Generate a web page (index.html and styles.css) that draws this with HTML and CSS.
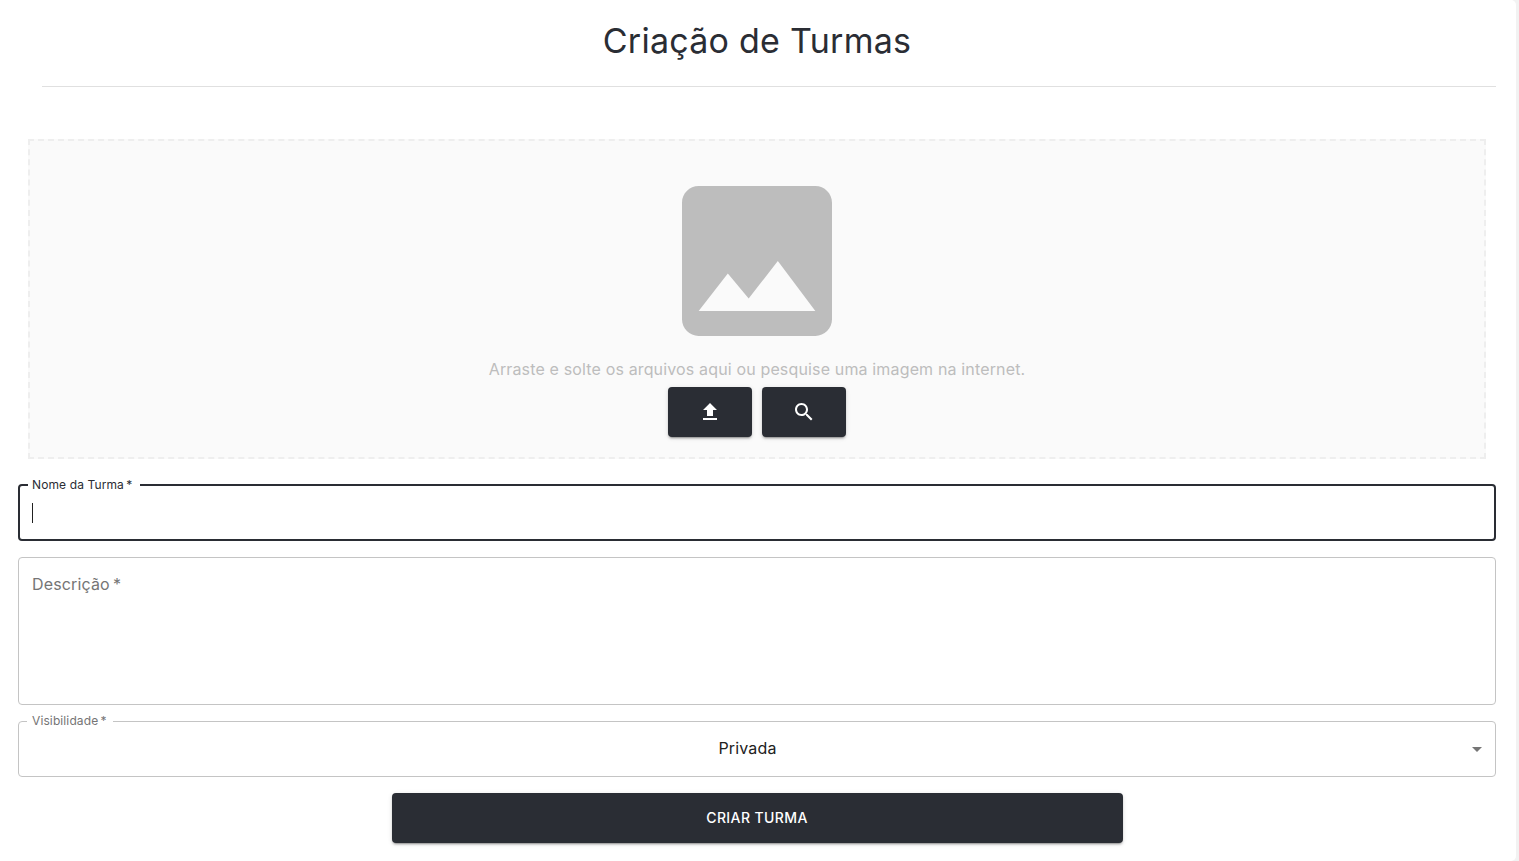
FILE: index.html
```html
<!DOCTYPE html>
<html lang="pt-BR">
<head>
<meta charset="utf-8">
<meta name="viewport" content="width=device-width, initial-scale=1">
<title>Criação de Turmas</title>
<link rel="stylesheet" href="styles.css">
</head>
<body>
<main class="panel">
  <h1 class="title">Criação de Turmas</h1>
  <hr class="divider">
  <form class="form">
    <section class="dropzone">
      <svg class="dropzone-image" viewBox="0 0 24 24" aria-hidden="true"><path d="M21 19V5c0-1.100-.9-2-2-2H5c-1.100 0-2 .9-2 2v14c0 1.100.9 2 2 2h14c1.100 0 2-.9 2-2zM8.500 13.500l2.500 3.010L14.500 12l4.500 6H5l3.500-4.500z"/></svg>
      <p class="dropzone-text">Arraste e solte os arquivos aqui ou pesquise uma imagem na internet.</p>
      <div class="dropzone-actions">
        <button type="button" class="button button-icon" aria-label="Enviar arquivo">
          <svg class="icon" viewBox="0 0 24 24" aria-hidden="true"><path d="M9 16h6v-6h4l-7-7-7 7h4zm-4 2h14v2H5z"/></svg>
        </button>
        <button type="button" class="button button-icon" aria-label="Pesquisar imagem">
          <svg class="icon" viewBox="0 0 24 24" aria-hidden="true"><path d="M15.500 14h-.79l-.28-.27C15.410 12.590 16 11.110 16 9.500 16 5.910 13.090 3 9.500 3S3 5.910 3 9.500 5.910 16 9.500 16c1.610 0 3.090-.59 4.230-1.570l.27.28v.79l5 4.990L20.490 19l-4.990-5zm-6 0C7.010 14 5 11.990 5 9.500S7.010 5 9.500 5 14 7.010 14 9.500 11.990 14 9.500 14z"/></svg>
        </button>
      </div>
    </section>
    <div class="field field-active">
      <label class="label" for="nome">Nome da Turma&thinsp;*</label>
      <input class="control" id="nome" type="text" required autofocus>
    </div>
    <div class="field">
      <label class="label label-inside" for="descricao">Descrição&thinsp;*</label>
      <textarea class="control control-area" id="descricao" required></textarea>
    </div>
    <div class="field">
      <label class="label" for="visibilidade">Visibilidade&thinsp;*</label>
      <select class="control control-select" id="visibilidade" required>
        <option>Privada</option>
      </select>
      <svg class="icon select-arrow" viewBox="0 0 24 24" aria-hidden="true"><path d="M7 10l5 5 5-5z"/></svg>
    </div>
    <button type="submit" class="button button-submit">CRIAR TURMA</button>
  </form>
</main>
</body>
</html>
```
FILE: styles.css
```css
* {
  box-sizing: border-box;
}

body {
  margin: 0;
  background: #f2f2f2;
  color: #2a2d34;
  font-family: Inter, Roboto, sans-serif;
  font-size: 16px;
}

.panel {
  min-height: 100vh;
  margin-right: 3px;
  padding: 20px 20px 18px 18px;
  border-radius: 0 5px 5px 0;
  background: #fff;
}

.title {
  margin: 0;
  font-size: 34px;
  font-weight: 400;
  line-height: 42px;
  letter-spacing: 0.00735em;
  text-align: center;
}

.divider {
  height: 1px;
  margin: 24px 0 52px 24px;
  border: 0;
  background: #e0e0e0;
}

.form {
  display: flex;
  flex-direction: column;
  gap: 16px;
}

.dropzone {
  display: flex;
  flex-direction: column;
  align-items: center;
  margin: 0 10px 9px;
  padding: 20px;
  border: 2px dashed #eee;
  background: #fafafa;
  color: #bdbdbd;
}

.dropzone-image {
  width: 200px;
  height: 200px;
  fill: currentColor;
}

.dropzone-text {
  margin: 0 0 10px;
  line-height: 16px;
  letter-spacing: 0.00938em;
}

.dropzone-actions {
  display: flex;
  gap: 10px;
}

.button {
  height: 50px;
  border: 0;
  border-radius: 4px;
  background: #2a2d34;
  box-shadow: 0 3px 1px -2px rgba(0, 0, 0, 0.2), 0 2px 2px 0 rgba(0, 0, 0, 0.14), 0 1px 5px 0 rgba(0, 0, 0, 0.12);
  color: #fff;
  font: 500 14px/24px Inter, Roboto, sans-serif;
  letter-spacing: 0.02857em;
  cursor: pointer;
}

.button-icon {
  display: flex;
  align-items: center;
  justify-content: center;
  width: 84px;
}

.button-submit {
  align-self: center;
  width: 50%;
  max-width: 731px;
}

.icon {
  width: 24px;
  height: 24px;
  fill: currentColor;
}

.field {
  position: relative;
  display: flex;
  border: 1px solid #c4c4c4;
  border-radius: 4px;
  color: #757575;
}

.field-active {
  border: 2px solid #2a2d34;
  color: #2a2d34;
}

.field-active::after {
  content: "";
  position: absolute;
  top: 17px;
  left: 12px;
  width: 1px;
  height: 20px;
  background: #212121;
  pointer-events: none;
}

.field-active .control {
  caret-color: transparent;
}

.label {
  position: absolute;
  top: -9px;
  left: 8px;
  padding: 0 6px 0 5px;
  background: #fff;
  font-size: 12px;
  line-height: 16px;
  letter-spacing: 0.00938em;
}

.field-active .label {
  padding: 0 8px 0 4px;
}

.label-inside {
  top: 14px;
  font-size: 16px;
  line-height: 24px;
}

.control {
  width: 100%;
  height: 53px;
  padding: 0 12px;
  border: 0;
  outline: 0;
  background: transparent;
  color: #212121;
  font: 400 16px/24px Inter, Roboto, sans-serif;
  letter-spacing: 0.00938em;
}

.control-area {
  height: 146px;
  padding: 16px 13px;
  resize: none;
}

.control-select {
  height: 54px;
  padding: 0 32px 2px 13px;
  appearance: none;
  text-align-last: center;
}

.select-arrow {
  position: absolute;
  top: 15px;
  right: 6px;
  pointer-events: none;
}
```
